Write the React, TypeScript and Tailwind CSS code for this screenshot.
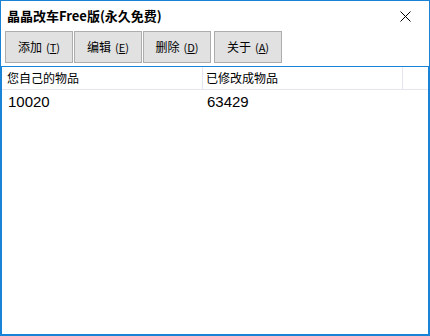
const cjk = "font-['Noto_Sans_CJK_SC','Noto_Sans',sans-serif]";

const buttons = [
  { label: "添加", key: "T" },
  { label: "编辑", key: "E" },
  { label: "删除", key: "D" },
  { label: "关于", key: "A" },
];

function ToolButton({ label, hotkey, className = "" }: { label: string; hotkey: string; className?: string }) {
  return (
    <button
      className={`w-[68px] h-[32px] bg-[#e1e1e1] border border-[#adadad] flex items-center justify-center text-[12px] text-black leading-none ${cjk} ${className}`}
    >
      <span>{label}</span>
      <span className="ml-[4px] text-[11px]">
        (<span className="underline">{hotkey}</span>)
      </span>
    </button>
  );
}

export default function App() {
  return (
    <div className="w-[430px] h-[336px] bg-white border border-[#1883d7] flex flex-col">
      {/* Title bar */}
      <div className="h-[30px] flex items-center justify-between pl-[6px] pr-[18px]">
        <span className={`text-[13px] font-bold text-black ${cjk}`}>晶晶改车Free版(永久免费)</span>
        <svg width="11" height="11" viewBox="0 0 11 11" className="text-black">
          <path d="M0.5 0.5 L10.5 10.5 M10.5 0.5 L0.5 10.5" stroke="currentColor" strokeWidth="1" />
        </svg>
      </div>

      {/* Toolbar */}
      <div className="h-[35px] flex items-start pl-[4px]">
        <ToolButton label={buttons[0].label} hotkey={buttons[0].key} />
        <ToolButton label={buttons[1].label} hotkey={buttons[1].key} className="ml-[1px]" />
        <ToolButton label={buttons[2].label} hotkey={buttons[2].key} className="ml-[1px]" />
        <ToolButton label={buttons[3].label} hotkey={buttons[3].key} className="ml-[3px]" />
      </div>

      {/* List view */}
      <div className="flex-1 border border-[#1883d7] flex flex-col">
        <div className="h-[23px] flex border-b border-[#e5e5f0] text-[12px] text-black">
          <div className={`w-[201px] border-r border-[#e5e5f0] flex items-center pl-[5px] ${cjk}`}>您自己的物品</div>
          <div className={`w-[200px] border-r border-[#e5e5f0] flex items-center pl-[3px] ${cjk}`}>已修改成物品</div>
          <div className="flex-1" />
        </div>
        <div className="h-[24px] flex items-center text-[15px] text-black font-['Liberation_Sans',sans-serif]">
          <div className="w-[202px] pl-[6px]">10020</div>
          <div className="pl-[3px]">63429</div>
        </div>
      </div>
    </div>
  );
}
